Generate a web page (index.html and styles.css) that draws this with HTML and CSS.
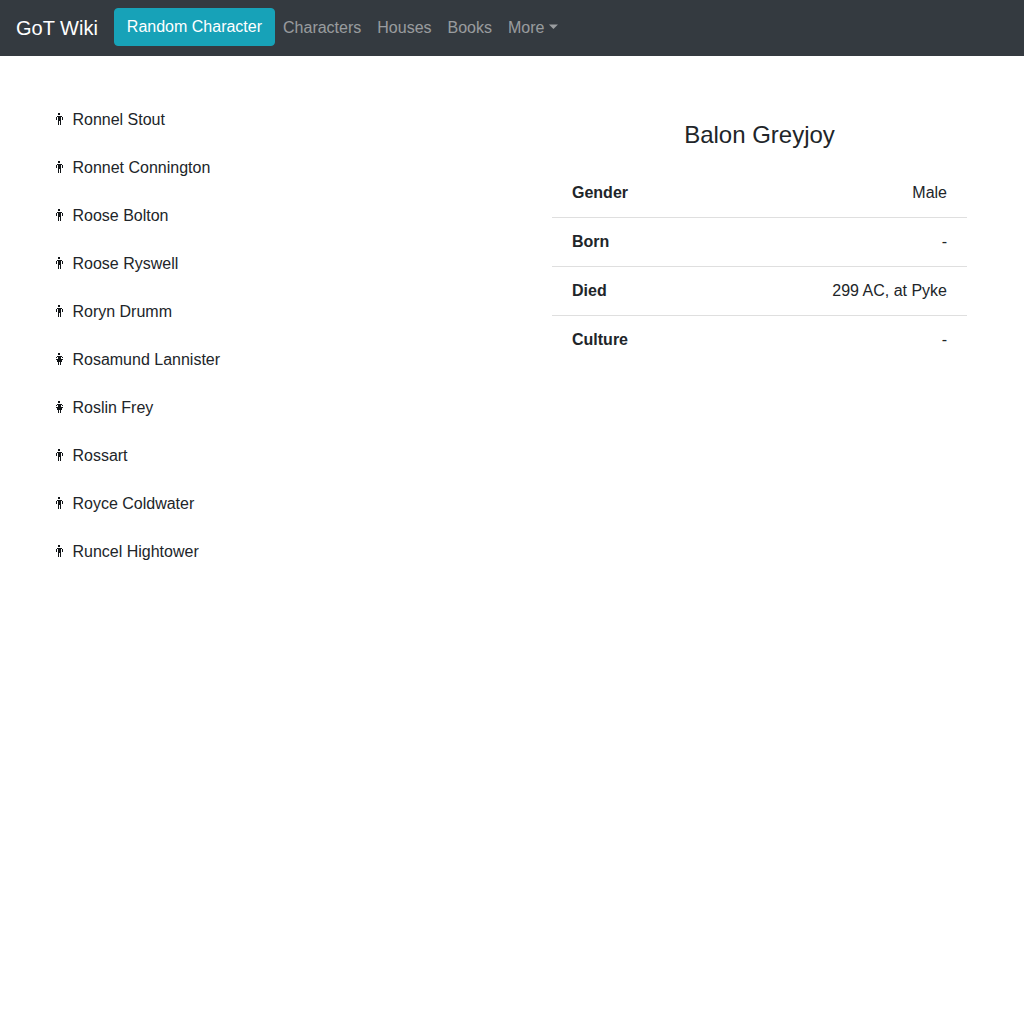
FILE: index.html
```html
<!DOCTYPE html>
<html lang="en">
<head>
<meta charset="utf-8">
<title>GoT Wiki</title>
<link rel="stylesheet" href="styles.css">
</head>
<body>
<svg class="symbols" aria-hidden="true">
  <symbol id="male" viewBox="0 0 8 13"><path d="M2 0h2v2H2zM1 3h5v1H1zM0 4h1v3H0zM6 4h1v3H6zM2 4h3v4H2zM2 8h1v4H2zM4 8h1v4H4z"/></symbol>
  <symbol id="female" viewBox="0 0 8 13"><path d="M2 0h2v2H2zM1 3h5v1H1zM0 4h1v1H0zM2 4h3v2H2zM6 4h1v1H6zM0 6h7v1H0zM1 7h5v2H1zM2 9h1v3H2zM4 9h1v3H4z"/></symbol>
</svg>
<nav class="navbar">
  <a class="brand">GoT Wiki</a>
  <button class="btn" type="button">Random Character</button>
  <a class="nav-link">Characters</a>
  <a class="nav-link">Houses</a>
  <a class="nav-link">Books</a>
  <a class="nav-link dropdown">More</a>
</nav>
<main class="content">
  <ul class="people">
    <li><svg class="icon"><use href="#male"/></svg>Ronnel Stout</li>
    <li><svg class="icon"><use href="#male"/></svg>Ronnet Connington</li>
    <li><svg class="icon"><use href="#male"/></svg>Roose Bolton</li>
    <li><svg class="icon"><use href="#male"/></svg>Roose Ryswell</li>
    <li><svg class="icon"><use href="#male"/></svg>Roryn Drumm</li>
    <li><svg class="icon"><use href="#female"/></svg>Rosamund Lannister</li>
    <li><svg class="icon"><use href="#female"/></svg>Roslin Frey</li>
    <li><svg class="icon"><use href="#male"/></svg>Rossart</li>
    <li><svg class="icon"><use href="#male"/></svg>Royce Coldwater</li>
    <li><svg class="icon"><use href="#male"/></svg>Runcel Hightower</li>
  </ul>
  <section class="details">
    <h4 class="name">Balon Greyjoy</h4>
    <dl class="facts">
      <div class="fact"><dt>Gender</dt><dd>Male</dd></div>
      <div class="fact"><dt>Born</dt><dd>-</dd></div>
      <div class="fact"><dt>Died</dt><dd>299 AC, at Pyke</dd></div>
      <div class="fact"><dt>Culture</dt><dd>-</dd></div>
    </dl>
  </section>
</main>
</body>
</html>
```
FILE: styles.css
```css
* { box-sizing: border-box; }
body { margin: 0; font: 16px/24px "Liberation Sans", Arial, sans-serif; color: #212529; background: #fff; }
.symbols { display: none; }
.navbar { display: flex; align-items: center; height: 56px; padding: 0 16px; background: #343a40; }
.brand { margin-right: 16px; font-size: 20px; line-height: 30px; color: #fff; }
.btn { height: 38px; margin-bottom: 2px; padding: 6px 12px; border: 1px solid #17a2b8; border-radius: 4px; background: #17a2b8; color: #fff; font: inherit; }
.nav-link { padding: 8px; color: rgba(255, 255, 255, .5); }
.dropdown::after { content: ""; display: inline-block; width: 9px; height: 4.5px; margin-left: 4.5px; vertical-align: .255em; background: currentColor; clip-path: polygon(0 0, 100% 0, 50% 100%); }
.content { display: grid; grid-template-columns: 1fr 1fr; }
.people { margin: 0; padding: 40px 0 0 56px; list-style: none; }
.people li { display: flex; align-items: center; height: 48px; }
.icon { width: 8px; height: 13px; margin: 0 8.45px 1px 0; fill: #111417; shape-rendering: crispEdges; }
.details { padding: 64px 57px 0 40px; }
.name { margin: 0 0 20px; font-size: 24px; font-weight: 400; line-height: 29px; text-align: center; }
.facts { margin: 0; }
.fact { display: flex; justify-content: space-between; padding: 12px 20px; border-bottom: 1px solid #dfdfdf; }
.fact:last-child { border-bottom: 0; }
dt { font-weight: 700; }
dd { margin: 0; }
```
